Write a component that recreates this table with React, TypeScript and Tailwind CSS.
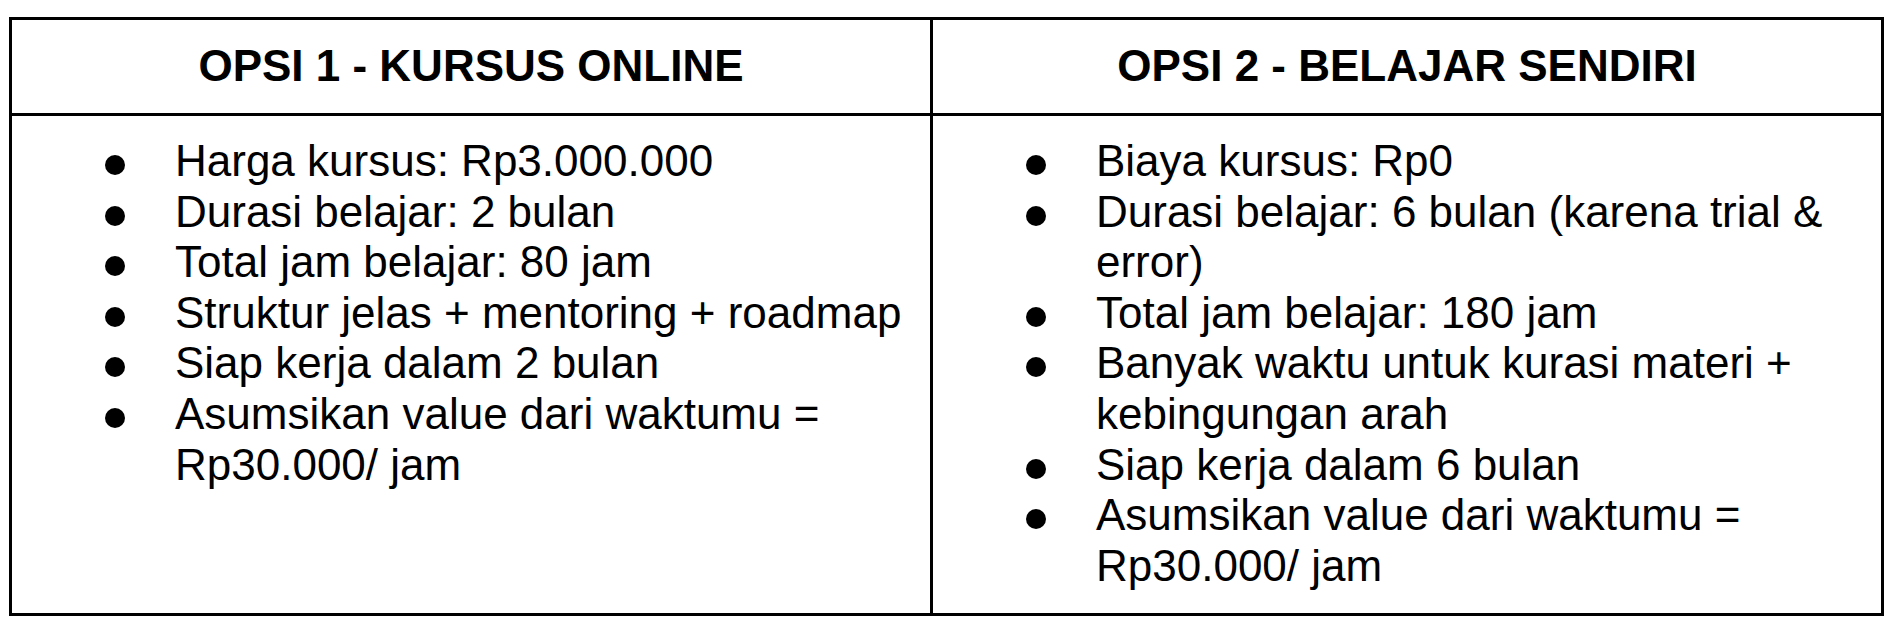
import React from "react";

const left = [
  "Harga kursus: Rp3.000.000",
  "Durasi belajar: 2 bulan",
  "Total jam belajar: 80 jam",
  "Struktur jelas + mentoring + roadmap",
  "Siap kerja dalam 2 bulan",
  "Asumsikan value dari waktumu = Rp30.000/ jam",
];

const right = [
  "Biaya kursus: Rp0",
  "Durasi belajar: 6 bulan (karena trial & error)",
  "Total jam belajar: 180 jam",
  "Banyak waktu untuk kurasi materi + kebingungan arah",
  "Siap kerja dalam 6 bulan",
  "Asumsikan value dari waktumu = Rp30.000/ jam",
];

function List({ items }: { items: string[] }) {
  return (
    <ul className="flex flex-col">
      {items.map((t, i) => (
        <li key={i} className="flex">
          <div className="w-[143px] shrink-0">
            <div className="ml-[73px] mt-[19px] h-[20px] w-[20px] rounded-full bg-black" />
          </div>
          <div className="min-w-0 flex-1">{t}</div>
        </li>
      ))}
    </ul>
  );
}

export default function App() {
  return (
    <div
      className="h-[630px] w-[1896px] bg-white pl-[9px] pt-[17px] text-black"
      style={{ fontFamily: '"Liberation Sans", Arial, sans-serif' }}
    >
      <div className="grid w-[1875px] grid-cols-[921px_948px] grid-rows-[96px_497px] border-[3px] border-black text-[44px] leading-[1.15]">
        <div className="flex items-center justify-center border-b-[3px] border-r-[3px] border-black px-[20px] font-bold">
          OPSI 1 - KURSUS ONLINE
        </div>
        <div className="flex items-center justify-center border-b-[3px] border-black px-[20px] font-bold">
          OPSI 2 - BELAJAR SENDIRI
        </div>
        <div className="border-r-[3px] border-black px-[20px] py-[20px]">
          <List items={left} />
        </div>
        <div className="px-[20px] py-[20px]">
          <List items={right} />
        </div>
      </div>
    </div>
  );
}
